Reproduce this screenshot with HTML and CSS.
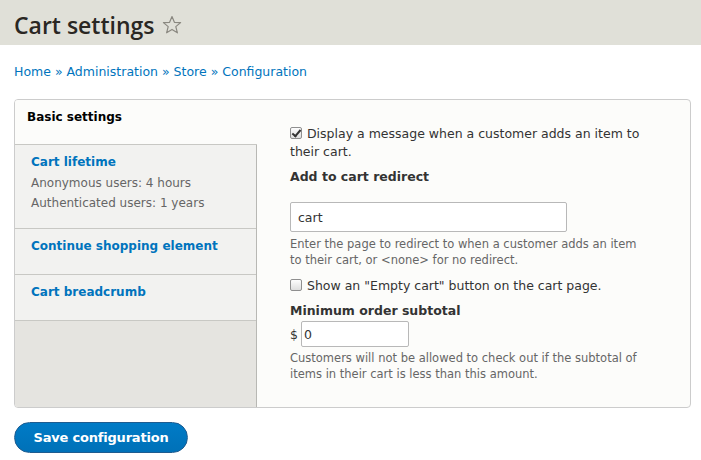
FILE: index.html
```html
<!DOCTYPE html>
<html>
<head>
<meta charset="utf-8">
<link rel="stylesheet" href="styles.css">
</head>
<body>
<div class="page-header">
  <h1 class="title">Cart settings</h1>
  <svg class="star" width="20" height="20" viewBox="0 0 20 20"><polygon points="10,1.5 12.4,7.3 18.6,7.6 13.8,11.6 15.4,17.8 10,14.4 4.6,17.8 6.2,11.6 1.4,7.6 7.6,7.3" fill="none" stroke="#8a8880" stroke-width="1.2" stroke-linejoin="round"/></svg>
</div>
<div class="content">
  <nav class="breadcrumb"><a href="#">Home</a> » <a href="#">Administration</a> » <a href="#">Store</a> » <a href="#">Configuration</a></nav>
  <div class="vtabs">
    <ul class="vtabs-menu">
      <li class="vtab selected"><span class="vtab-title">Basic settings</span></li>
      <li class="vtab"><a class="vtab-title" href="#">Cart lifetime</a><div class="summary">Anonymous users: 4 hours<br>Authenticated users: 1 years</div></li>
      <li class="vtab"><a class="vtab-title" href="#">Continue shopping element</a></li>
      <li class="vtab"><a class="vtab-title" href="#">Cart breadcrumb</a></li>
    </ul>
    <div class="vtabs-pane">
      <label class="check"><span class="box checked"></span> Display a message when a customer adds an item to their cart.</label>
      <div class="field">
        <div class="label">Add to cart redirect</div>
        <input class="text redirect" type="text" value="cart">
        <div class="desc">Enter the page to redirect to when a customer adds an item to their cart, or &lt;none&gt; for no redirect.</div>
      </div>
      <label class="check empty"><span class="box"></span> Show an "Empty cart" button on the cart page.</label>
      <div class="field">
        <div class="label label-tight">Minimum order subtotal</div>
        <div class="money"><span class="currency">$</span><input class="text amount" type="text" value="0"></div>
        <div class="desc">Customers will not be allowed to check out if the subtotal of items in their cart is less than this amount.</div>
      </div>
    </div>
  </div>
  <button class="save">Save configuration</button>
</div>
</body>
</html>
```
FILE: styles.css
```css
* { box-sizing: border-box; }
body {
  margin: 0;
  background: #fff;
  font-family: "DejaVu Sans", sans-serif;
  font-size: 12px;
  color: #333;
}
.page-header {
  background: #e0e0d8;
  height: 45px;
  padding: 4px 14px 0;
  display: flex;
  align-items: center;
  gap: 7px;
}
.title {
  margin: 0;
  font-family: "Open Sans", "DejaVu Sans", sans-serif;
  font-size: 23px;
  font-weight: 600;
  color: #2a2723;
}
.star { margin-top: 1px; }
.content { padding: 0 10px 0 14px; }
.breadcrumb {
  margin: 19px 0 19px;
  font-size: 12.5px;
  line-height: 16px;
  color: #0074bd;
}
a { color: #0074bd; text-decoration: none; }
.vtabs {
  display: flex;
  border: 1px solid #ccc;
  border-radius: 4px;
  background: #fcfcfa;
  height: 309px;
  overflow: hidden;
}
.vtabs-menu {
  list-style: none;
  margin: 0;
  padding: 0;
  width: 242px;
  flex: none;
  background: #e5e4e0;
  border-right: 1px solid #b8b8b4;
}
.vtab {
  background: #f2f2f0;
  border-bottom: 1px solid #c8c8c4;
  padding: 10px 15px 12px 16px;
  height: 46px;
}
.vtab:nth-child(2) { height: 84px; }
.vtab.selected {
  background: #fcfcfa;
  margin-right: -1px;
  padding-left: 12px;
  height: 45px;
}
.vtab-title {
  font-weight: bold;
  font-size: 12px;
  display: block;
  color: #0074bd;
}
.selected .vtab-title { color: #000; }
.summary {
  color: #666;
  font-size: 12px;
  line-height: 20px;
  margin-top: 4px;
}
.vtabs-pane {
  flex: 1;
  padding: 25px 40px 0 33px;
}
.check {
  display: block;
  font-size: 12.5px;
  line-height: 18px;
  color: #333;
  max-width: 360px;
}
.box {
  display: inline-block;
  width: 12px;
  height: 12px;
  border: 1px solid #8f8f8f;
  border-radius: 2px;
  background: linear-gradient(#fdfdfd, #dedede);
  vertical-align: -1px;
  position: relative;
  margin-right: 1px;
}
.box.checked::after {
  content: "";
  position: absolute;
  left: 3px;
  top: 0px;
  width: 3px;
  height: 7px;
  border: solid #333;
  border-width: 0 2px 2px 0;
  transform: rotate(40deg);
}
.field { margin-top: 8px; }
.label {
  font-weight: bold;
  font-size: 12.5px;
  color: #333;
  margin-bottom: 18px;
}
.label-tight { margin-bottom: 3px; }
.text {
  font-family: "DejaVu Sans", sans-serif;
  font-size: 12.5px;
  color: #333;
  border: 1px solid #b8b8b8;
  border-radius: 2px;
  background: #fff;
  padding: 0 7px;
  display: block;
}
.redirect { width: 277px; height: 30px; }
.desc {
  color: #666;
  font-size: 11.5px;
  line-height: 16px;
  margin-top: 4px;
  max-width: 370px;
}
.check.empty { margin-top: 9px; }
.money { display: flex; align-items: center; gap: 3px; }
.currency { font-size: 12.5px; color: #333; }
.amount { width: 108px; height: 26px; padding: 0 2px; }
.field:last-child .desc { margin-top: 3px; }
.save {
  margin: 14px 0 0;
  height: 31px;
  width: 174px;
  border: 1px solid #1e5c90;
  border-radius: 20px;
  background: linear-gradient(#007bc6, #0071b8);
  color: #fff;
  font-family: "DejaVu Sans", sans-serif;
  font-weight: bold;
  font-size: 13px;
  letter-spacing: -0.2px;
}
```
